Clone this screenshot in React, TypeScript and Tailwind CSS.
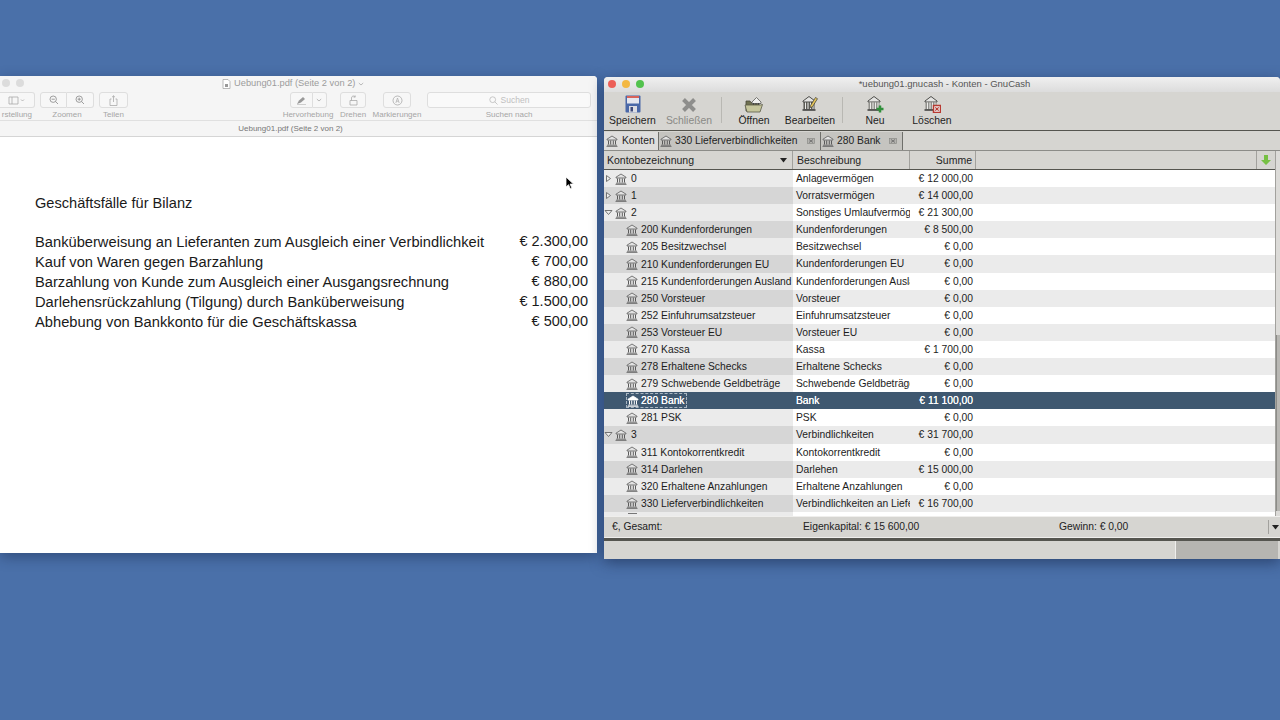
import React from "react";

const sans = "font-['Liberation_Sans',Arial,sans-serif]";

function BankIcon({ white = false }: { white?: boolean }) {
  const c = white ? "#ffffff" : "#5a5a5a";
  return (
    <svg width="12" height="12" viewBox="0 0 12 12" fill="none" className="shrink-0">
      <path d="M1 4.200 6 1l5 3.200v.8H1z" fill={white ? "#fff" : "#e2e2e2"} stroke={c} strokeWidth="0.8" />
      <path d="M2.500 5.500v4M4.700 5.500v4M7.300 5.500v4M9.500 5.500v4" stroke={c} strokeWidth="1" />
      <path d="M1 10.200h10M.5 11.400h11" stroke={c} strokeWidth="0.8" />
    </svg>
  );
}

type Row = { name: string; desc: string; sum: string; level: 0 | 1; arrow?: "right" | "down"; selected?: boolean };

const rows: Row[] = [
  { name: "0", desc: "Anlagevermögen", sum: "€ 12 000,00", level: 0, arrow: "right" },
  { name: "1", desc: "Vorratsvermögen", sum: "€ 14 000,00", level: 0, arrow: "right" },
  { name: "2", desc: "Sonstiges Umlaufvermögen", sum: "€ 21 300,00", level: 0, arrow: "down" },
  { name: "200 Kundenforderungen", desc: "Kundenforderungen", sum: "€ 8 500,00", level: 1 },
  { name: "205 Besitzwechsel", desc: "Besitzwechsel", sum: "€ 0,00", level: 1 },
  { name: "210 Kundenforderungen EU", desc: "Kundenforderungen EU", sum: "€ 0,00", level: 1 },
  { name: "215 Kundenforderungen Ausland", desc: "Kundenforderungen Ausland", sum: "€ 0,00", level: 1 },
  { name: "250 Vorsteuer", desc: "Vorsteuer", sum: "€ 0,00", level: 1 },
  { name: "252 Einfuhrumsatzsteuer", desc: "Einfuhrumsatzsteuer", sum: "€ 0,00", level: 1 },
  { name: "253 Vorsteuer EU", desc: "Vorsteuer EU", sum: "€ 0,00", level: 1 },
  { name: "270 Kassa", desc: "Kassa", sum: "€ 1 700,00", level: 1 },
  { name: "278 Erhaltene Schecks", desc: "Erhaltene Schecks", sum: "€ 0,00", level: 1 },
  { name: "279 Schwebende Geldbeträge", desc: "Schwebende Geldbeträge", sum: "€ 0,00", level: 1 },
  { name: "280 Bank", desc: "Bank", sum: "€ 11 100,00", level: 1, selected: true },
  { name: "281 PSK", desc: "PSK", sum: "€ 0,00", level: 1 },
  { name: "3", desc: "Verbindlichkeiten", sum: "€ 31 700,00", level: 0, arrow: "down" },
  { name: "311 Kontokorrentkredit", desc: "Kontokorrentkredit", sum: "€ 0,00", level: 1 },
  { name: "314 Darlehen", desc: "Darlehen", sum: "€ 15 000,00", level: 1 },
  { name: "320 Erhaltene Anzahlungen", desc: "Erhaltene Anzahlungen", sum: "€ 0,00", level: 1 },
  { name: "330 Lieferverbindlichkeiten", desc: "Verbindlichkeiten an Lieferanten", sum: "€ 16 700,00", level: 1 },
];

const bills = [
  ["Banküberweisung an Lieferanten zum Ausgleich einer Verbindlichkeit", "€ 2.300,00"],
  ["Kauf von Waren gegen Barzahlung", "€ 700,00"],
  ["Barzahlung von Kunde zum Ausgleich einer Ausgangsrechnung", "€ 880,00"],
  ["Darlehensrückzahlung (Tilgung) durch Banküberweisung", "€ 1.500,00"],
  ["Abhebung von Bankkonto für die Geschäftskassa", "€ 500,00"],
];

function Arrow({ dir }: { dir?: "right" | "down" }) {
  return (
    <svg width="9" height="9" viewBox="0 0 9 9" className="shrink-0">
      {dir === "right" ? (
        <path d="M2.500 1.500 6.500 4.500 2.500 7.500z" fill="#eee" stroke="#666" strokeWidth="0.9" />
      ) : (
        <path d="M1 2.500h7L4.500 6.500z" fill="#eee" stroke="#666" strokeWidth="0.9" />
      )}
    </svg>
  );
}

function TreeRow({ row, index }: { row: Row; index: number }) {
  const odd = index % 2 === 1;
  if (row.selected) {
    return (
      <div className="flex h-[17.1px] bg-[#3f5870] text-[10.3px] leading-[17px] text-white [text-shadow:0_0_0.6px_#ffffff]">
        <div className="flex w-[189px] items-center pl-[22px]">
          <span className="flex h-[15px] items-center gap-[2px] border border-dashed border-[#a9b6c2] pr-[1px]">
            <BankIcon white />
            <span>{row.name}</span>
          </span>
        </div>
        <div className="w-[117px] overflow-hidden whitespace-nowrap pl-[3px]">{row.desc}</div>
        <div className="w-[66px] whitespace-nowrap pr-[3px] text-right">{row.sum}</div>
      </div>
    );
  }
  return (
    <div className={`flex h-[17.1px] text-[10.3px] leading-[17px] text-[#1c1c1c] ${odd ? "bg-[#ebebeb]" : "bg-white"}`}>
      <div
        className={`flex w-[189px] items-center overflow-hidden whitespace-nowrap ${odd ? "bg-[#d6d6d6]" : "bg-[#ebebeb]"} ${
          row.level === 0 ? "" : "gap-[3px] pl-[22px]"
        }`}
      >
        {row.level === 0 && <Arrow dir={row.arrow} />}
        {row.level === 0 ? (
          <span className="ml-[2px] mr-[4px]">
            <BankIcon />
          </span>
        ) : (
          <BankIcon />
        )}
        <span>{row.name}</span>
      </div>
      <div className={`w-[117px] overflow-hidden whitespace-nowrap pl-[3px] ${odd ? "bg-[#ebebeb]" : "bg-white"}`}>
        {row.desc}
      </div>
      <div className="w-[66px] whitespace-nowrap pr-[3px] text-right">{row.sum}</div>
    </div>
  );
}

function ToolButton({ label, width, dim, children }: { label: string; width: string; dim?: boolean; children: React.ReactNode }) {
  return (
    <div className={`flex ${width} flex-col items-center`}>
      <div className="flex h-[18px] items-end">{children}</div>
      <span className={`mt-[1px] whitespace-nowrap text-[10.400px] leading-[13px] ${dim ? "text-[#8a8a86]" : "text-[#1e1e1e]"}`}>{label}</span>
    </div>
  );
}

function ToolBank({ badge }: { badge?: "new" | "del" | "edit" }) {
  return (
    <svg width="18" height="18" viewBox="0 0 18 18" fill="none">
      <path d="M2 6 8 1.500 14 6v1H2z" fill="#e4e4e2" stroke="#4d4d4a" strokeWidth="1" />
      <path d="M2.500 7h11v7.500h-11z" fill={badge === "edit" ? "#55554f" : "#8c8c88"} />
      <path d="M4.500 7.500v6.500M7 7.500v6.500M9.500 7.500v6.500M12 7.500v6.500" stroke="#ececea" strokeWidth="1.100" />
      <path d="M1.500 15h13" stroke="#3a3a38" strokeWidth="1.500" />
      {badge === "new" && <path d="M14 10.500v7M10.500 14h7" stroke="#2f8f3a" strokeWidth="2.500" />}
      {badge === "del" && (
        <>
          <rect x="10.500" y="10.500" width="7" height="7" fill="#eee" stroke="#b83a32" strokeWidth="1.500" />
          <path d="M12.300 12.300l3.400 3.400M15.700 12.300l-3.400 3.400" stroke="#b83a32" strokeWidth="1.200" />
        </>
      )}
      {badge === "edit" && <path d="M9.500 10.500l5-8 2 1.200-5 8-2.200 1z" fill="#e6c65a" stroke="#3a3a38" strokeWidth="0.7" />}
    </svg>
  );
}

function TabClose() {
  return (
    <svg width="8" height="6" viewBox="0 0 8 6" fill="none" className="shrink-0">
      <rect x="0.500" y="0.500" width="7" height="5" fill="#b4b3af" stroke="#8a8a86" strokeWidth="0.7" />
      <path d="M2 1.500l4 3M6 1.500l-4 3" stroke="#666" strokeWidth="0.8" />
    </svg>
  );
}

function PdfButton({ className, children }: { className: string; children?: React.ReactNode }) {
  return (
    <div className={`flex h-[16px] items-center justify-center rounded-[3px] border border-[#dedede] bg-[#f7f7f7] ${className}`}>{children}</div>
  );
}

export default function App() {
  return (
    <div className={`relative h-[720px] w-[1280px] overflow-hidden bg-[#4a70a9] ${sans}`}>
      {/* PDF-Vorschau */}
      <div className="absolute left-0 top-[76px] flex h-[477px] w-[597px] flex-col overflow-hidden rounded-tr-[4px] bg-white shadow-[0_4px_14px_rgba(20,35,70,0.45)]">
        <div className="relative h-[61px] shrink-0 border-b border-[#d5d5d5] bg-[#f5f5f5] text-[#9c9c9c]">
          <div className="absolute left-[2px] top-[3px] flex gap-[6px]">
            <span className="h-[8px] w-[8px] rounded-full bg-[#dcdcdc]" />
            <span className="h-[8px] w-[8px] rounded-full bg-[#dcdcdc]" />
          </div>
          <div className="absolute left-[222px] top-[1px] flex h-[14px] items-center gap-[3px] whitespace-nowrap text-[9.300px]">
            <svg width="9" height="10" viewBox="0 0 9 10" fill="none">
              <path d="M1 .5h5l2 2v7H1z" fill="#fff" stroke="#aaa" strokeWidth="0.8" />
              <rect x="3" y="5" width="3" height="3" fill="#999" />
            </svg>
            <span>Uebung01.pdf (Seite 2 von 2)</span>
            <svg width="6" height="6" viewBox="0 0 6 6" fill="none"><path d="M.8 2 3 4l2.200-2" stroke="#aaa" strokeWidth="0.8" /></svg>
          </div>

          <div className="absolute left-0 top-[16px] flex w-[597px] items-start text-[8px] leading-[10px] text-[#a5a5a5]">
            <div className="flex w-[35px] shrink-0 flex-col items-end">
              <PdfButton className="w-[35px] rounded-l-none border-l-0">
                <svg width="18" height="9" viewBox="0 0 18 9" fill="none">
                  <path d="M1 1h9v7H1zM4 1v7" stroke="#aaa" strokeWidth="0.8" />
                  <path d="M13 3.500l1.500 1.500L16 3.500" stroke="#aaa" strokeWidth="0.8" />
                </svg>
              </PdfButton>
              <span className="mt-[2px] whitespace-nowrap pr-[3px]">rstellung</span>
            </div>
            <div className="ml-[5px] flex w-[54px] shrink-0 flex-col items-center">
              <div className="flex">
                <PdfButton className="w-[27px] rounded-r-none">
                  <svg width="10" height="10" viewBox="0 0 10 10" fill="none"><circle cx="4.200" cy="4.200" r="3.200" stroke="#888" strokeWidth="0.8" /><path d="M6.600 6.600 9 9M2.600 4.200h3.200" stroke="#888" strokeWidth="0.8" /></svg>
                </PdfButton>
                <PdfButton className="w-[27px] rounded-l-none border-l-0">
                  <svg width="10" height="10" viewBox="0 0 10 10" fill="none"><circle cx="4.200" cy="4.200" r="3.200" stroke="#888" strokeWidth="0.8" /><path d="M6.600 6.600 9 9M2.600 4.200h3.200M4.200 2.600v3.200" stroke="#888" strokeWidth="0.8" /></svg>
                </PdfButton>
              </div>
              <span className="mt-[2px]">Zoomen</span>
            </div>
            <div className="ml-[5px] flex w-[29px] shrink-0 flex-col items-center">
              <PdfButton className="w-[29px]">
                <svg width="9" height="11" viewBox="0 0 9 11" fill="none"><path d="M2.500 4H1v6.500h7V4H6.500M4.500 7V.8M3 2.200 4.500.8 6 2.200" stroke="#aaa" strokeWidth="0.8" /></svg>
              </PdfButton>
              <span className="mt-[2px]">Teilen</span>
            </div>
            <div className="ml-[150px] flex w-[60px] shrink-0 flex-col items-center">
              <div className="flex">
                <PdfButton className="w-[23px] rounded-r-none">
                  <svg width="11" height="9" viewBox="0 0 11 9"><path d="M1 8 3 4.500 7 1l2 2-4 3.500z" fill="#999" /><path d="M1 8.500h9" stroke="#bbb" strokeWidth="0.7" /></svg>
                </PdfButton>
                <PdfButton className="w-[14px] rounded-l-none border-l-0">
                  <svg width="6" height="6" viewBox="0 0 6 6" fill="none"><path d="M.8 2 3 4l2.200-2" stroke="#aaa" strokeWidth="0.8" /></svg>
                </PdfButton>
              </div>
              <span className="mt-[2px] whitespace-nowrap">Hervorhebung</span>
            </div>
            <div className="ml-[2px] flex w-[26px] shrink-0 flex-col items-center">
              <PdfButton className="w-[26px]">
                <svg width="11" height="11" viewBox="0 0 11 11" fill="none"><path d="M2 5.500h7v4.500H2zM3.500 5.500V3a2 2 0 0 1 3.600-1.200M7.200.5v1.600H5.600" stroke="#aaa" strokeWidth="0.8" /></svg>
              </PdfButton>
              <span className="mt-[2px]">Drehen</span>
            </div>
            <div className="ml-[7px] flex w-[48px] shrink-0 flex-col items-center">
              <PdfButton className="w-[28px]">
                <svg width="11" height="11" viewBox="0 0 11 11" fill="none"><circle cx="5.500" cy="5.500" r="4.500" stroke="#aaa" strokeWidth="0.8" /><path d="M3.800 8 5.500 3l1.700 5M4.400 6.200h2.200" stroke="#aaa" strokeWidth="0.7" /></svg>
              </PdfButton>
              <span className="mt-[2px] whitespace-nowrap">Markierungen</span>
            </div>
            <div className="ml-[6px] flex w-[164px] shrink-0 flex-col items-center">
              <PdfButton className="w-[164px] gap-[3px] bg-[#f9f9f9]">
                <svg width="9" height="9" viewBox="0 0 9 9" fill="none"><circle cx="3.700" cy="3.700" r="2.900" stroke="#bbb" strokeWidth="0.8" /><path d="M5.800 5.800 8.500 8.500" stroke="#bbb" strokeWidth="0.8" /></svg>
                <span className="text-[8.500px] text-[#c0c0c0]">Suchen</span>
              </PdfButton>
              <span className="mt-[2px] whitespace-nowrap">Suchen nach</span>
            </div>
          </div>

          <div className="absolute bottom-0 left-0 flex h-[16px] w-full items-center justify-center border-t border-[#e0e0e0] pr-[16px] text-[8px] text-[#777]">
            Uebung01.pdf (Seite 2 von 2)
          </div>
        </div>

        <div className="relative flex-1 pl-[35px] pr-[9px] pt-[57px] text-[14.600px] text-[#1a1a1a]">
          <p className="leading-[18px]">Geschäftsfälle für Bilanz</p>
          <div className="mt-[20px] flex flex-col">
            {bills.map(([label, amount]) => (
              <div key={label} className="flex h-[20px] items-center justify-between whitespace-nowrap">
                <span className="text-[14.700px]">{label}</span>
                <span className="text-[14.500px]">{amount}</span>
              </div>
            ))}
          </div>
          <svg width="10" height="14" viewBox="0 0 10 14" className="absolute left-[565px] top-[39px]">
            <path d="M1 1v10l2.500-2.300 1.800 4 1.600-.7-1.800-3.900H8.500z" fill="#000" stroke="#fff" strokeWidth="0.8" />
          </svg>
        </div>
      </div>

      {/* GnuCash */}
      <div className="absolute left-[604px] top-[77px] flex h-[482px] w-[676px] flex-col overflow-hidden rounded-t-[4px] bg-[#d6d5d1] shadow-[0_4px_14px_rgba(20,35,70,0.55)]">
        <div className="relative flex h-[15px] shrink-0 items-center justify-center bg-gradient-to-b from-[#f0f0f0] to-[#dcdcdc] text-[9.500px] text-[#555]">
          <div className="absolute left-[4px] top-[3px] flex gap-[6px]">
            <span className="h-[8px] w-[8px] rounded-full bg-[#ec5f58]" />
            <span className="h-[8px] w-[8px] rounded-full bg-[#f3b843]" />
            <span className="h-[8px] w-[8px] rounded-full bg-[#52c24d]" />
          </div>
          <span className="pl-[5px]">*uebung01.gnucash - Konten - GnuCash</span>
        </div>

        <div className="flex h-[39px] shrink-0 items-start border-b border-[#55554f] bg-[#d6d5d1] pl-[1px] pt-[3px]">
          <ToolButton label="Speichern" width="w-[55px]">
            <svg width="16" height="18" viewBox="0 0 16 18">
              <rect x="0.500" y="0.500" width="15" height="17" rx="1" fill="#4a68a8" />
              <rect x="2" y="1" width="12" height="7.500" fill="#e4e6ee" />
              <rect x="2" y="1" width="12" height="2" fill="#d8635a" />
              <rect x="4" y="11" width="8" height="6.500" fill="#dcdce2" />
              <rect x="5.500" y="12" width="2.500" height="4.500" fill="#3e4a7a" />
            </svg>
          </ToolButton>
          <ToolButton label="Schließen" width="w-[58px]" dim>
            <svg width="16" height="16" viewBox="0 0 16 16"><path d="M2.500 2.500l11 11M13.500 2.500l-11 11" stroke="#8e8e8c" strokeWidth="4" /></svg>
          </ToolButton>
          <div className="ml-[3px] mr-[9px] mt-[2px] h-[26px] w-px bg-[#b9b8b3]" />
          <ToolButton label="Öffnen" width="w-[46px]">
            <svg width="20" height="17" viewBox="0 0 20 17">
              <path d="M2 5h4l1 1.500h8V15H2z" fill="#6f7050" stroke="#4a4a3a" strokeWidth="0.8" />
              <path d="M8 6 12.500 1.500 17 6v1.500H8z" fill="#f0f0ee" stroke="#5a5a55" strokeWidth="0.8" />
              <path d="M9.500 7v2M12 7v2M14.500 7v2" stroke="#444" strokeWidth="1" />
              <path d="M1 9h15.500l2-.5-2.500 7.500H3z" fill="#c6c69c" stroke="#5a5a48" strokeWidth="0.8" />
            </svg>
          </ToolButton>
          <ToolButton label="Bearbeiten" width="ml-[2px] w-[62px]">
            <ToolBank badge="edit" />
          </ToolButton>
          <div className="ml-[1px] mr-[9px] mt-[2px] h-[26px] w-px bg-[#b9b8b3]" />
          <ToolButton label="Neu" width="w-[46px]">
            <ToolBank badge="new" />
          </ToolButton>
          <ToolButton label="Löschen" width="w-[68px]">
            <ToolBank badge="del" />
          </ToolButton>
        </div>

        <div className="flex h-[20px] shrink-0 items-stretch border-b border-[#8c8c88] bg-[#d6d5d1] pt-[1px] text-[10.300px] text-[#1e1e1e]">
          <div className="flex w-[54px] items-center gap-[4px] bg-[#dedddc] pl-[2px]">
            <BankIcon />
            <span>Konten</span>
          </div>
          <div className="flex w-[162px] items-center gap-[3px] border-l border-[#6f6f6b] bg-[#c5c4c0] pl-[1px]">
            <BankIcon />
            <span className="whitespace-nowrap">330 Lieferverbindlichkeiten</span>
            <span className="ml-[6px]"><TabClose /></span>
          </div>
          <div className="flex w-[83px] items-center gap-[3px] border-x border-[#6f6f6b] bg-[#c5c4c0] pl-[1px]">
            <BankIcon />
            <span className="whitespace-nowrap">280 Bank</span>
            <span className="ml-[5px]"><TabClose /></span>
          </div>
        </div>

        <div className="flex min-h-0 flex-1">
          <div className="flex w-[671px] flex-col bg-white">
            <div className="flex h-[19px] shrink-0 border-b border-[#55554f] bg-[#d6d5d1] text-[10.500px] leading-[18px] text-[#1e1e1e]">
              <div className="flex w-[189px] items-center justify-between border-r border-[#a2a19d] pl-[3px] pr-[5px]">
                <span>Kontobezeichnung</span>
                <svg width="7" height="5" viewBox="0 0 7 5"><path d="M0 0h7L3.500 4.500z" fill="#222" /></svg>
              </div>
              <div className="w-[117px] border-r border-[#a2a19d] pl-[4px]">Beschreibung</div>
              <div className="w-[66px] border-r border-[#a2a19d] pr-[3px] text-right">Summe</div>
              <div className="flex-1 border-r border-[#a2a19d]" />
              <div className="flex w-[18px] items-center justify-center">
                <svg width="10" height="10" viewBox="0 0 10 10"><path d="M3 0h4v5h3L5 10 0 5h3z" fill="#76c043" /></svg>
              </div>
            </div>
            <div className="min-h-0 flex-1 overflow-hidden">
              {rows.map((row, i) => (
                <TreeRow key={row.name} row={row} index={i} />
              ))}
              <div className="flex h-[6px] bg-white">
                <div className="flex w-[189px] bg-[#ebebeb] pl-[24px]">
                  <span className="mt-[1px] h-[4px] w-[9px] border-t border-[#777]" />
                </div>
              </div>
            </div>
          </div>
          <div className="flex-1 border-l border-[#a2a19d] bg-[#dcdbd8]">
            <div className="mt-[184px] h-[176px] w-full border-l border-[#8c8c88] bg-[#b8b7b3]" />
          </div>
        </div>

        <div className="flex h-[22px] shrink-0 items-center border-y border-[#efeeec] bg-[#d6d5d1] pl-[3px] text-[10.300px] text-[#222]">
          <span className="w-[196px] pl-[5px]">€, Gesamt:</span>
          <span className="w-[256px] whitespace-nowrap">Eigenkapital: € 15 600,00</span>
          <span className="whitespace-nowrap">Gewinn: € 0,00</span>
          <span className="ml-auto flex h-[14px] w-[12px] items-center justify-end border-l border-[#a2a19d] pr-[1px]">
            <svg width="7" height="5" viewBox="0 0 7 5"><path d="M0 0h7L3.500 4.500z" fill="#222" /></svg>
          </span>
        </div>

        <div className="flex h-[21px] shrink-0 border-t-[3px] border-[#55554f] bg-[#d6d5d1]">
          <div className="flex-1" />
          <div className="mr-[2px] w-[103px] border-l border-[#efeeec] bg-[#b6b5b1]" />
        </div>
      </div>
    </div>
  );
}
